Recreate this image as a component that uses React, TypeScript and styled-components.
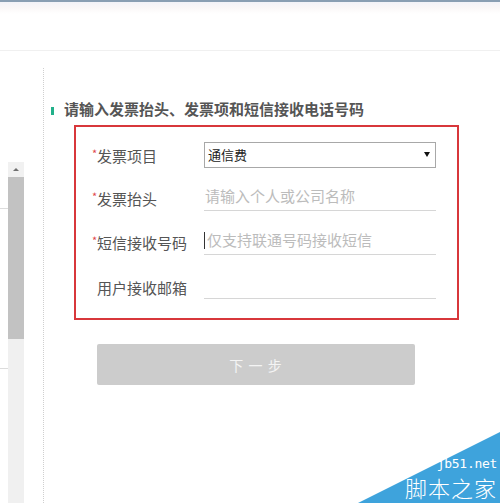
import React from "react";
import styled, { createGlobalStyle } from "styled-components";

const Global = createGlobalStyle`
  html, body { margin: 0; padding: 0; background: #ffffff; }
  body { font-family: "Noto Sans CJK SC", "Noto Sans", sans-serif; }
  * { box-sizing: border-box; }
`;

const Page = styled.div`
  position: relative;
  width: 500px;
  height: 503px;
  overflow: hidden;
  background: #fff;
  display: flex;
  flex-direction: column;
`;

const TopBar = styled.div`
  height: 51px;
  flex: none;
  border-top: 2px solid #8a9fb3;
  border-bottom: 1px solid #f0f0f0;
  background: linear-gradient(#f3f3f8 0px, #fbf8f8 6px, #ffffff 12px);
`;

const Main = styled.div`
  flex: 1;
  display: flex;
  min-height: 0;
`;

const Edge = styled.div`
  width: 8px;
  flex: none;
  display: flex;
  flex-direction: column;
  padding-top: 157px;
  gap: 159px;
`;

const EdgeLine = styled.div`
  height: 1px;
  background: #dcdcdc;
`;

const Scrollbar = styled.div`
  width: 16px;
  flex: none;
  margin-top: 111px;
  display: flex;
  flex-direction: column;
  background: #f0f0f0;
`;

const ScrollArrow = styled.div`
  height: 15px;
  display: flex;
  align-items: center;
  justify-content: center;
  background: #f1f1f1;
`;

const ArrowGlyph = styled.div`
  width: 0;
  height: 0;
  border-left: 3px solid transparent;
  border-right: 3px solid transparent;
  border-bottom: 3px solid #707070;
`;

const Thumb = styled.div`
  height: 162px;
  background: #c2c2c2;
`;

const Divider = styled.div`
  width: 1px;
  flex: none;
  margin-left: 19px;
  margin-top: 17px;
  border-left: 1px dotted #cfcfcf;
`;

const Content = styled.div`
  flex: 1;
  padding: 48px 0 0 7px;
  display: flex;
  flex-direction: column;
  align-items: flex-start;
`;

const Heading = styled.div`
  height: 20px;
  display: flex;
  align-items: center;
`;

const HeadingMark = styled.div`
  width: 3px;
  height: 8px;
  margin-top: 3px;
  background: #22b08a;
`;

const HeadingText = styled.h2`
  margin: 0 0 0 10px;
  font-size: 15px;
  line-height: 20px;
  font-weight: 700;
  color: #555555;
`;

const FormBox = styled.div`
  margin: 6px 0 0 23px;
  width: 385px;
  height: 195px;
  border: 2px solid #d8373b;
  padding: 14px 0 0 16px;
  display: flex;
  flex-direction: column;
  gap: 16px;
`;

const Row = styled.div<{ $h: number }>`
  display: grid;
  grid-template-columns: 112px 232px;
  height: ${(p) => p.$h}px;
  align-items: center;
`;

const Label = styled.label<{ $dy: number }>`
  display: flex;
  align-items: flex-start;
  font-size: 15px;
  line-height: 20px;
  color: #555555;
  margin-top: ${(p) => p.$dy}px;
`;

const Star = styled.span<{ $show: boolean }>`
  width: 5px;
  font-size: 11px;
  line-height: 14px;
  color: ${(p) => (p.$show ? "#e0474c" : "transparent")};
`;

const SelectWrap = styled.div`
  position: relative;
  height: 26px;
`;

const Select = styled.select`
  appearance: none;
  -webkit-appearance: none;
  width: 100%;
  height: 26px;
  border: 1px solid #a8a8a8;
  border-radius: 0;
  background: #fff;
  padding: 0 0 0 3px;
  font-family: "Noto Sans CJK SC", sans-serif;
  font-size: 13px;
  color: #222;
  outline: none;
`;

const SelectArrow = styled.div`
  position: absolute;
  right: 6px;
  top: 11px;
  width: 0;
  height: 0;
  border-left: 3px solid transparent;
  border-right: 3px solid transparent;
  border-top: 5px solid #111;
  pointer-events: none;
`;

const FieldWrap = styled.div`
  position: relative;
  height: 28px;
`;

const Input = styled.input<{ $indent?: number }>`
  width: 100%;
  height: 28px;
  border: none;
  border-bottom: 1px solid #d6d6d6;
  padding: 0 0 2px ${(p) => p.$indent ?? 1}px;
  font-family: "Noto Sans CJK SC", sans-serif;
  font-size: 15px;
  color: #333;
  outline: none;
  background: transparent;
  &::placeholder {
    color: #bcbcbc;
  }
`;

const Caret = styled.div`
  position: absolute;
  left: 0;
  top: 5px;
  width: 1px;
  height: 17px;
  background: #333;
`;

const NextButton = styled.button`
  margin: 24px 0 0 46px;
  width: 318px;
  height: 41px;
  border: none;
  border-radius: 2px;
  background: #cccccc;
  color: #f4f4f4;
  font-family: "Noto Sans CJK SC", sans-serif;
  font-size: 14px;
  letter-spacing: 1px;
  cursor: default;
`;

const Watermark = styled.div`
  position: absolute;
  right: 0;
  bottom: 0;
  width: 142px;
  height: 71px;
`;

const WatermarkShape = styled.svg`
  position: absolute;
  inset: 0;
`;

const WatermarkTexts = styled.div`
  position: absolute;
  right: 3px;
  bottom: 0;
  display: flex;
  flex-direction: column;
  align-items: flex-end;
  color: #ffffff;
`;

const WmSmall = styled.span`
  font-family: "DejaVu Sans Mono", monospace;
  font-size: 13px;
  line-height: normal;
  letter-spacing: -0.3px;
`;

const WmBig = styled.span`
  font-family: "Noto Sans CJK SC", sans-serif;
  font-size: 22px;
  line-height: normal;
  font-weight: 300;
  letter-spacing: 1px;
`;

export default function App() {
  return (
    <Page>
      <Global />
      <TopBar />
      <Main>
        <Edge>
          <EdgeLine />
          <EdgeLine />
        </Edge>
        <Scrollbar>
          <ScrollArrow>
            <ArrowGlyph />
          </ScrollArrow>
          <Thumb />
        </Scrollbar>
        <Divider />
        <Content>
          <Heading>
            <HeadingMark />
            <HeadingText>请输入发票抬头、发票项和短信接收电话号码</HeadingText>
          </Heading>
          <FormBox>
            <Row $h={26}>
              <Label $dy={4}>
                <Star $show>*</Star>发票项目
              </Label>
              <SelectWrap>
                <Select defaultValue="通信费">
                  <option value="通信费">通信费</option>
                </Select>
                <SelectArrow />
              </SelectWrap>
            </Row>
            <Row $h={28}>
              <Label $dy={3}>
                <Star $show>*</Star>发票抬头
              </Label>
              <FieldWrap>
                <Input placeholder="请输入个人或公司名称" />
              </FieldWrap>
            </Row>
            <Row $h={28}>
              <Label $dy={3}>
                <Star $show>*</Star>短信接收号码
              </Label>
              <FieldWrap>
                <Input $indent={3} placeholder="仅支持联通号码接收短信" />
                <Caret />
              </FieldWrap>
            </Row>
            <Row $h={28}>
              <Label $dy={6}>
                <Star $show={false}>*</Star>用户接收邮箱
              </Label>
              <FieldWrap>
                <Input />
              </FieldWrap>
            </Row>
          </FormBox>
          <NextButton type="button">下 一 步</NextButton>
        </Content>
      </Main>
      <Watermark>
        <WatermarkShape width="142" height="71" viewBox="0 0 142 71">
          <polygon points="0,71 142,0 142,71" fill="#3ea3dc" />
        </WatermarkShape>
        <WatermarkTexts>
          <WmSmall>jb51.net</WmSmall>
          <WmBig>脚本之家</WmBig>
        </WatermarkTexts>
      </Watermark>
    </Page>
  );
}
